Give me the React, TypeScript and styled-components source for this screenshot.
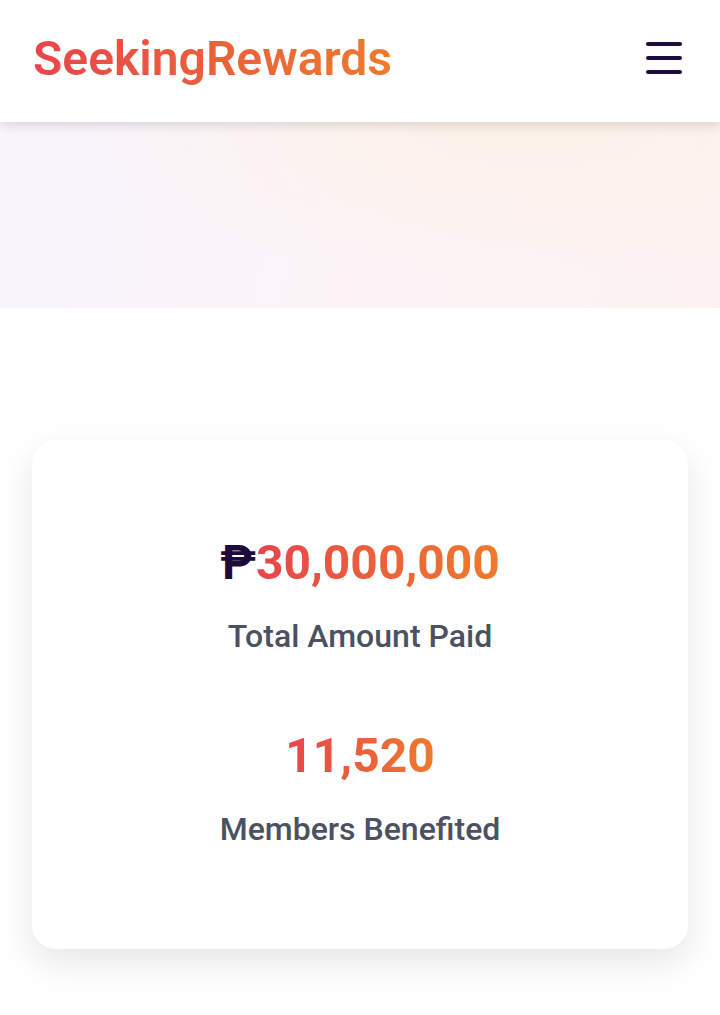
import React from 'react';
import styled, { createGlobalStyle } from 'styled-components';

const GlobalStyle = createGlobalStyle`
  * { box-sizing: border-box; }
  body {
    margin: 0;
    font-family: Roboto, "Liberation Sans", sans-serif;
    background: #ffffff;
  }
`;

const gradientText = `
  background: linear-gradient(90deg, #e8454b 0%, #ee7b2c 100%);
  -webkit-background-clip: text;
  background-clip: text;
  color: transparent;
`;

//Header
const Header = styled.header`
  position: relative;
  z-index: 2;
  height: 122px;
  display: flex;
  align-items: center;
  justify-content: space-between;
  padding: 0 38px 6px 33px;
  background: #ffffff;
  box-shadow: 0 4px 10px rgba(0, 0, 0, 0.12);
`;

const Logo = styled.div`
  font-size: 48px;
  font-weight: 600;
  letter-spacing: 0;
  ${gradientText}
`;

const MenuButton = styled.button`
  display: flex;
  flex-direction: column;
  gap: 10px;
  padding: 0;
  border: none;
  background: none;
`;

const MenuLine = styled.span`
  display: block;
  width: 36px;
  height: 4px;
  border-radius: 2px;
  background: #1d0b3b;
`;

//Hero
const Hero = styled.section`
  height: 186px;
  background:
    radial-gradient(ellipse at 70% 0%, rgba(253, 240, 226, 0.7) 0%, rgba(253, 240, 226, 0) 60%),
    linear-gradient(100deg, #f8f5fd 0%, #fcf4f7 50%, #fdf2f1 100%);
`;

//Stats
const StatsSection = styled.section`
  padding: 132px 32px 60px;
`;

const Card = styled.div`
  display: flex;
  flex-direction: column;
  align-items: center;
  padding: 94px 0 100px;
  border-radius: 24px;
  background: #ffffff;
  box-shadow: 0 14px 36px rgba(0, 0, 0, 0.1);
`;

const Stat = styled.div<{ $gap?: number }>`
  display: flex;
  flex-direction: column;
  align-items: center;
  margin-top: ${(p) => p.$gap || 0}px;
`;

const Value = styled.div`
  font-size: 48px;
  font-weight: 700;
  line-height: 58px;
`;

const Peso = styled.span`
  color: #1d0b3b;
`;

const Digits = styled.span`
  ${gradientText}
`;

const Label = styled.div`
  margin-top: 24px;
  font-size: 32px;
  font-weight: 500;
  color: #4b5160;
  line-height: 40px;
`;

const App = () => {
  return (
    <>
      <GlobalStyle />
      <Header>
        <Logo>SeekingRewards</Logo>
        <MenuButton aria-label="Menu">
          <MenuLine />
          <MenuLine />
          <MenuLine />
        </MenuButton>
      </Header>

      <Hero />

      <StatsSection>
        <Card>
          <Stat>
            <Value>
              <Peso>₱</Peso>
              <Digits>30,000,000</Digits>
            </Value>
            <Label>Total Amount Paid</Label>
          </Stat>

          <Stat $gap={71}>
            <Value>
              <Digits>11,520</Digits>
            </Value>
            <Label>Members Benefited</Label>
          </Stat>
        </Card>
      </StatsSection>
    </>
  );
};

export default App;
